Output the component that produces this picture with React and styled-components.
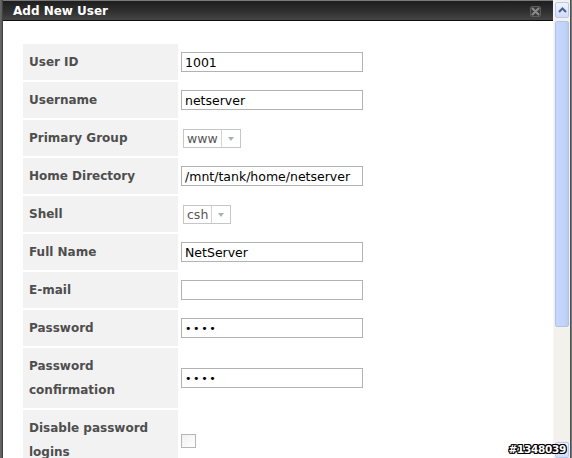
import React from "react";
import styled, { createGlobalStyle } from "styled-components";

const Global = createGlobalStyle`
  html, body { margin: 0; padding: 0; background: #fff; overflow: hidden; }
  * { box-sizing: border-box; }
`;

const Frame = styled.div`
  position: relative;
  width: 572px;
  height: 458px;
  display: flex;
  overflow: hidden;
  background: #fff;
`;

const LeftEdge = styled.div`
  width: 3px;
  flex-shrink: 0;
  background: linear-gradient(to right, #6a6a6a, #5a5a5a 66%, #2a2a2a);
`;

const Main = styled.div`
  flex: 1;
  display: flex;
  flex-direction: column;
  min-width: 0;
  min-height: 0;
`;

const TitleBar = styled.div`
  height: 21px;
  flex-shrink: 0;
  display: flex;
  align-items: center;
  justify-content: space-between;
  padding: 0 8px 0 10px;
  border-top: 1px solid #7a7a7a;
  border-bottom: 1px solid #0e0e0e;
  background: linear-gradient(to bottom, #1e1e1e, #2e2e2e 50%, #454545);
`;

const Title = styled.span`
  font-family: "DejaVu Sans", Verdana, sans-serif;
  font-weight: bold;
  font-size: 12px;
  color: #fff;
`;

const CloseIcon = styled.svg`
  width: 11px;
  height: 11px;
  margin-right: 4px;
  margin-top: 1px;
`;

const Body = styled.div`
  flex: 1;
  min-height: 0;
  overflow: hidden;
  padding: 23px 0 0 20px;
  background: #fff;
`;

const Form = styled.div`
  display: grid;
  grid-template-columns: 155px 1fr;
  row-gap: 2px;
`;

const Label = styled.div`
  background: #f2f2f2;
  padding: 6px 6px;
  font-family: "DejaVu Sans", Verdana, sans-serif;
  font-weight: bold;
  font-size: 12px;
  line-height: 24px;
  color: #4e4e4e;
`;

const Field = styled.div`
  display: flex;
  align-items: center;
  padding-left: 3px;
`;

const TextInput = styled.input`
  width: 182px;
  height: 20px;
  border: 1px solid #b2b2b2;
  padding: 0 3px;
  margin: 0;
  font-family: "DejaVu Sans", Tahoma, sans-serif;
  font-size: ${(p) => (p.type === "password" ? "11px" : "12.5px")};
  color: #000;
  background: #fff;
  outline: none;
  border-radius: 0;
  letter-spacing: ${(p) => (p.type === "password" ? "1.6px" : "0")};
`;

const SelectBox = styled.div`
  margin-left: 2px;
  height: 19px;
  display: flex;
  border: 1px solid #c6c6c6;
  background: #fff;
`;

const SelectValue = styled.span`
  padding: 0 3px;
  min-width: ${(p) => p.$w}px;
  font-family: "DejaVu Sans", Tahoma, sans-serif;
  font-size: 12.5px;
  line-height: 17px;
  color: #555;
  border-right: 1px solid #d4d4d4;
`;

const SelectArrow = styled.span`
  width: 18px;
  display: flex;
  align-items: center;
  justify-content: center;
  &::after {
    content: "";
    border-left: 3.5px solid transparent;
    border-right: 3.5px solid transparent;
    border-top: 4px solid #a8b0bc;
    margin-top: 1px;
  }
`;

const CheckBox = styled.span`
  width: 15px;
  height: 14px;
  border: 1px solid #b6b6b6;
  background: linear-gradient(to bottom right, #f0f0f0, #fff);
  margin-top: 2px;
`;

const Scrollbar = styled.div`
  width: 17px;
  flex-shrink: 0;
  display: flex;
  flex-direction: column;
  background: #f3f1ec;
  padding: 2px 1px 0 1px;
  border-left: 1px solid #f7f6f3;
`;

const ScrollButton = styled.div`
  height: 16px;
  flex-shrink: 0;
  border: 1px solid #b7c9f1;
  border-radius: 2px;
  background: linear-gradient(to bottom, #eef3ff, #cfdcfb);
  display: flex;
  align-items: center;
  justify-content: center;
`;

const Thumb = styled.div`
  margin-top: 3px;
  height: 306px;
  flex-shrink: 0;
  border: 1px solid #b0c3ee;
  border-radius: 2px;
  background: linear-gradient(to right, #c6d6fc, #c2d3fa 70%, #b9caf2);
`;

const Track = styled.div`
  flex: 1;
`;

const DownButton = styled(ScrollButton)`
  height: 16px;
`;

const RightEdge = styled.div`
  width: 2px;
  flex-shrink: 0;
  background: linear-gradient(to right, #3c3c3c, #8a8a8a);
`;

const Watermark = styled.div`
  position: absolute;
  right: 6px;
  bottom: 2px;
  font-family: "DejaVu Sans", Verdana, sans-serif;
  font-weight: bold;
  font-size: 10.5px;
  line-height: 14px;
  color: #fff;
  letter-spacing: -0.3px;
  text-shadow:
    -1px -1px 0 #000, 1px -1px 0 #000, -1px 1px 0 #000, 1px 1px 0 #000,
    0 -1px 0 #000, 0 1px 0 #000, -1px 0 0 #000, 1px 0 0 #000;
`;

const rows = [
  { label: "User ID", kind: "text", value: "1001" },
  { label: "Username", kind: "text", value: "netserver" },
  { label: "Primary Group", kind: "select", value: "www", w: 34 },
  { label: "Home Directory", kind: "text", value: "/mnt/tank/home/netserver" },
  { label: "Shell", kind: "select", value: "csh", w: 21 },
  { label: "Full Name", kind: "text", value: "NetServer" },
  { label: "E-mail", kind: "text", value: "" },
  { label: "Password", kind: "password", value: "abcd" },
  { label: "Password confirmation", kind: "password", value: "abcd" },
  { label: "Disable password logins", kind: "checkbox" },
];

function renderField(r) {
  if (r.kind === "select") {
    return (
      <SelectBox>
        <SelectValue $w={r.w}>{r.value}</SelectValue>
        <SelectArrow />
      </SelectBox>
    );
  }
  if (r.kind === "checkbox") return <CheckBox />;
  return <TextInput type={r.kind} defaultValue={r.value} readOnly />;
}

export default function App() {
  return (
    <>
      <Global />
      <Frame>
        <LeftEdge />
        <Main>
          <TitleBar>
            <Title>Add New User</Title>
            <CloseIcon viewBox="0 0 11 11">
              <rect x="0.5" y="0.5" width="10" height="10" rx="1.5" fill="#3a3a3a" stroke="#5c5c5c" />
              <path d="M2.5 2.5 L8.5 8.5 M8.5 2.5 L2.5 8.5" stroke="#8c8c8c" strokeWidth="2" strokeLinecap="round" />
            </CloseIcon>
          </TitleBar>
          <Body>
            <Form>
              {rows.map((r) => (
                <React.Fragment key={r.label}>
                  <Label>{r.label}</Label>
                  <Field>{renderField(r)}</Field>
                </React.Fragment>
              ))}
            </Form>
          </Body>
        </Main>
        <Scrollbar>
          <ScrollButton>
            <svg width="9" height="6" viewBox="0 0 9 6">
              <path d="M1 5 L4.5 1.5 L8 5" fill="none" stroke="#4d6188" strokeWidth="2" />
            </svg>
          </ScrollButton>
          <Thumb />
          <Track />
          <DownButton />
        </Scrollbar>
        <RightEdge />
        <Watermark>#1348039</Watermark>
      </Frame>
    </>
  );
}
